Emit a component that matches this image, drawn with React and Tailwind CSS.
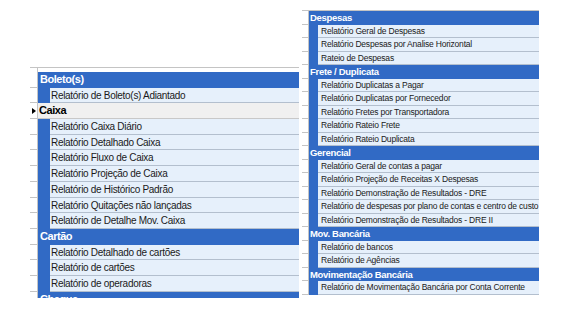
import React from 'react';

const left = [
  { t: 'h', label: 'Boleto(s)' },
  { t: 'r', label: 'Relatório de Boleto(s) Adiantado' },
  { t: 's', label: 'Caixa' },
  { t: 'r', label: 'Relatório Caixa Diário' },
  { t: 'r', label: 'Relatório Detalhado Caixa' },
  { t: 'r', label: 'Relatório Fluxo de Caixa' },
  { t: 'r', label: 'Relatório Projeção de Caixa' },
  { t: 'r', label: 'Relatório de Histórico Padrão' },
  { t: 'r', label: 'Relatório Quitações não lançadas' },
  { t: 'r', label: 'Relatório de Detalhe Mov. Caixa' },
  { t: 'h', label: 'Cartão' },
  { t: 'r', label: 'Relatório Detalhado de cartões' },
  { t: 'r', label: 'Relatório de cartões' },
  { t: 'r', label: 'Relatório de operadoras' },
  { t: 'h', label: 'Cheque' },
];

const right = [
  { t: 'h', label: 'Despesas' },
  { t: 'r', label: 'Relatório Geral de Despesas' },
  { t: 'r', label: 'Relatório Despesas por Analise Horizontal' },
  { t: 'r', label: 'Rateio de Despesas' },
  { t: 'h', label: 'Frete / Duplicata' },
  { t: 'r', label: 'Relatório Duplicatas a Pagar' },
  { t: 'r', label: 'Relatório Duplicatas por Fornecedor' },
  { t: 'r', label: 'Relatório Fretes por Transportadora' },
  { t: 'r', label: 'Relatório Rateio Frete' },
  { t: 'r', label: 'Relatório Rateio Duplicata' },
  { t: 'h', label: 'Gerencial' },
  { t: 'r', label: 'Relatório Geral de contas a pagar' },
  { t: 'r', label: 'Relatório Projeção de Receitas X Despesas' },
  { t: 'r', label: 'Relatório Demonstração de Resultados - DRE' },
  { t: 'r', label: 'Relatório de despesas por plano de contas e centro de custo' },
  { t: 'r', label: 'Relatório Demonstração de Resultados - DRE II' },
  { t: 'h', label: 'Mov. Bancária' },
  { t: 'r', label: 'Relatório de bancos' },
  { t: 'r', label: 'Relatório de Agências' },
  { t: 'h', label: 'Movimentação Bancária' },
  { t: 'r', label: 'Relatório de Movimentação Bancária por Conta Corrente' },
];

function LeftRow({ row }) {
  return (
    <div className="flex h-[15.7px]">
      <div className="w-[8px] shrink-0 border-b border-r border-[#c4c4c4] bg-white flex items-center justify-center">
        {row.t === 's' && <span className="block w-0 h-0 border-y-[3px] border-y-transparent border-l-[4px] border-l-black" />}
      </div>
      {row.t === 'h' && (
        <div className="flex-1 bg-[#316ac5] text-white font-bold text-[11px] tracking-[-0.45px] leading-[15px] pl-[2px] whitespace-nowrap overflow-hidden">
          {row.label}
        </div>
      )}
      {row.t === 's' && (
        <div className="flex-1 bg-[#f0f0f0] border-b border-[#c8c8c8] text-black font-bold text-[11px] tracking-[-0.45px] leading-[15px] pl-[1px] whitespace-nowrap overflow-hidden">
          {row.label}
        </div>
      )}
      {row.t === 'r' && (
        <>
          <div className="w-[12px] shrink-0 bg-[#316ac5]" />
          <div className="flex-1 bg-[#e6f0fb] border-b border-[#b3bfce] text-[#1a1a1a] text-[10px] tracking-[-0.3px] leading-[15px] pl-[1px] whitespace-nowrap overflow-hidden">
            {row.label}
          </div>
        </>
      )}
    </div>
  );
}

function RightRow({ row }) {
  return (
    <div className="flex h-[13.53px]">
      <div className="w-[7px] shrink-0 border-b border-r border-[#c4c4c4] bg-white" />
      {row.t === 'h' ? (
        <div className="flex-1 bg-[#316ac5] text-white font-bold text-[9.5px] tracking-[-0.3px] leading-[13px] pl-[1px] whitespace-nowrap overflow-hidden">
          {row.label}
        </div>
      ) : (
        <>
          <div className="w-[9px] shrink-0 bg-[#316ac5]" />
          <div className="flex-1 bg-[#e6f0fb] border-b border-[#b3bfce] text-[#1a1a1a] text-[8.5px] tracking-[-0.2px] leading-[13px] pl-[3px] whitespace-nowrap overflow-hidden">
            {row.label}
          </div>
        </>
      )}
    </div>
  );
}

export default function App() {
  return (
    <div className="w-[565px] h-[325px] bg-white flex items-start overflow-hidden" style={{ fontFamily: '"Liberation Sans", Arial, sans-serif' }}>
      {/* left grid */}
      <div className="ml-[30px] mt-[67px] w-[269px] h-[231px] overflow-hidden border-t border-[#c4c4c4]">
        <div className="flex h-[4px]">
          <div className="w-[8px] border-r border-[#c4c4c4]" />
          <div className="flex-1" />
        </div>
        {left.map((row, i) => (
          <LeftRow key={i} row={row} />
        ))}
      </div>

      {/* right grid */}
      <div className="ml-[3px] mt-[10px] w-[237px] border-t border-[#c4c4c4]">
        {right.map((row, i) => (
          <RightRow key={i} row={row} />
        ))}
      </div>
    </div>
  );
}
